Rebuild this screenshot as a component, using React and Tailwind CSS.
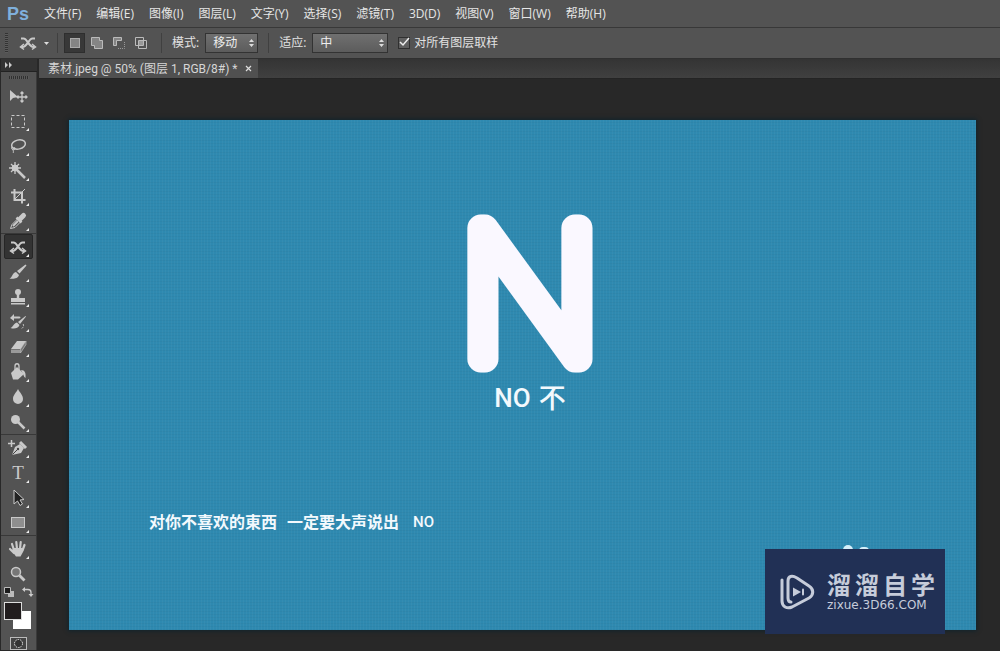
import { useState } from 'react';

const menus = [
  '文件(F)', '编辑(E)', '图像(I)', '图层(L)', '文字(Y)', '选择(S)',
  '滤镜(T)', '3D(D)', '视图(V)', '窗口(W)', '帮助(H)',
];

const ShufflePaths = () => (
  <g fill="none" stroke="currentColor" strokeWidth="2">
    <path d="M5 7.500h2.500c4 0 5 8.500 10 8.500h1" />
    <path d="M19 7.500h-2.500c-4 0-5 8.500-10 8.500h-1" />
    <path d="M8 13l-3.500 3 3.500 2.500M16 13l3.500 3-3.500 2.500" strokeWidth="1.500" />
  </g>
);

// every icon sits on a 24x24 grid, the flyout mark is added by ToolButton
const icons = {
  move: (
    <>
      <path d="M4 6v11l3-3 5-1z" fill="currentColor" />
      <path d="M16 8v10M11 13h10M14.500 9.500L16 8l1.500 1.500M14.500 16.500L16 18l1.500-1.500M12.500 11.500L11 13l1.500 1.500M19.500 11.500L21 13l-1.500 1.500" fill="none" stroke="currentColor" strokeWidth="1.300" />
    </>
  ),
  marquee: <rect x="5.500" y="6.500" width="13" height="12" fill="none" stroke="currentColor" strokeDasharray="3 2" />,
  lasso: (
    <g fill="none" stroke="currentColor" strokeWidth="1.500">
      <ellipse cx="12.500" cy="10.500" rx="7" ry="4.500" transform="rotate(-14 12.500 10.500)" />
      <path d="M6 13c-2 2 2 4 3 2s-2-2-2 0 1 3 0 4" strokeWidth="1" />
    </g>
  ),
  wand: (
    <g stroke="currentColor" fill="none">
      <circle cx="9" cy="9" r="3" fill="currentColor" />
      <path d="M9 3v12M3 9h12M5 5l8 8M13 5l-8 8" strokeWidth="1.300" />
      <path d="M11 11l8 8" strokeWidth="2.500" />
    </g>
  ),
  crop: (
    <g fill="none" stroke="currentColor">
      <path d="M8.500 5v11h11M5 8.500h11v11" strokeWidth="2" />
      <path d="M9 15L19 5" />
    </g>
  ),
  eyedropper: (
    <g stroke="currentColor" fill="none">
      <path d="M4.500 19.500l1.500-4 6-6 3 3-6 6z" />
      <path d="M7 17l5-5" strokeWidth="2" />
      <path d="M10.500 8.500l5 5" strokeWidth="2.500" />
      <path d="M14 10l3.500-3.500" strokeWidth="5" strokeLinecap="round" />
    </g>
  ),
  contentMove: <ShufflePaths />,
  brush: (
    <g fill="currentColor">
      <path d="M19.500 4.500L11 11l2.500 2.500 7-8z" />
      <path d="M10 12l3 3c-1 4-6 4-9.500 3.500 3-1 2.500-5.500 6.500-6.500z" />
    </g>
  ),
  stamp: (
    <g fill="currentColor">
      <circle cx="12" cy="7" r="3" />
      <path d="M10.800 8h2.400v5h-2.400zM5 13h14v4H5zM5 18h14v1.500H5z" />
    </g>
  ),
  historyBrush: (
    <g fill="currentColor">
      <path d="M19.500 6L12 12l2 2 6-7.500z" />
      <path d="M11 12.500l2.500 2.500c-1.500 4-6 4-9 3 3-1 2.500-4.500 6.500-5.500z" />
      <path d="M4 8l4-4v2.500h5c2 0 2 2 0 2H8V11z" />
      <path d="M17 14c1.500 1.500 0 4-2 5" fill="none" stroke="currentColor" strokeDasharray="2 1" />
    </g>
  ),
  eraser: (
    <>
      <path d="M11 6h9l-5 8H5z" fill="currentColor" />
      <path d="M5 14.500h9V18H5z" fill="#999" />
      <path d="M20 6v3.500L14.500 18v-4z" fill="#777" stroke="currentColor" strokeWidth=".6" />
    </>
  ),
  bucket: (
    <>
      <path d="M11 7l7 7-6 5.500H7L5 13z" fill="currentColor" />
      <path d="M9 13V6c0-3 4-3 4 0v5" fill="none" stroke="currentColor" strokeWidth="1.300" />
      <path d="M15 10c4 0 5 3 4.500 8-2-1-2-4-3-5z" fill="currentColor" />
    </>
  ),
  blur: <path d="M12 4c2 4 5 6 5 10a5 5 0 01-10 0c0-4 3-6 5-10z" fill="currentColor" />,
  dodge: (
    <>
      <circle cx="9.500" cy="9.500" r="4.500" fill="currentColor" />
      <path d="M12 12l6.500 6.500" stroke="currentColor" strokeWidth="2.500" />
    </>
  ),
  pen: (
    <>
      <path d="M5.500 4v7M2 7.500h7" stroke="currentColor" strokeWidth="1.500" />
      <path d="M6 19l3-8 5-3 4 4-3 5z" fill="currentColor" />
      <path d="M14 6l6 6" stroke="currentColor" strokeWidth="3" />
      <path d="M6.500 18.500L12 13" stroke="#444" />
      <circle cx="12" cy="13" r="1.200" fill="#444" />
    </>
  ),
  select: <path d="M8 4v14l3.500-3 2.500 4.500 2.500-1.500-2.500-4 4-.5z" fill="#222" stroke="currentColor" />,
  shape: <rect x="5.500" y="6.500" width="13" height="10" fill="#8e8e8e" stroke="currentColor" />,
  hand: (
    <>
      <path d="M8 13L6 7M11 12l-.7-7M14 12l.7-7M16.500 13.500L18.500 8M8 16l-4-4" stroke="currentColor" strokeWidth="2.200" strokeLinecap="round" />
      <path d="M7 11h10.500l-.5 4-2.500 4.500H10L6 14z" fill="currentColor" />
    </>
  ),
  zoom: (
    <>
      <circle cx="10" cy="10" r="4.500" fill="#777" stroke="currentColor" strokeWidth="1.500" />
      <path d="M13.500 13.500l5 5" stroke="currentColor" strokeWidth="2.800" />
    </>
  ),
};

const toolGroups = [
  [['move', '移动工具'], ['marquee', '矩形选框工具'], ['lasso', '套索工具'], ['wand', '魔棒工具'], ['crop', '裁剪工具'], ['eyedropper', '吸管工具']],
  [['contentMove', '内容感知移动工具'], ['brush', '画笔工具'], ['stamp', '仿制图章工具'], ['historyBrush', '历史记录画笔工具'], ['eraser', '橡皮擦工具'], ['bucket', '油漆桶工具'], ['blur', '模糊工具'], ['dodge', '减淡工具']],
  [['pen', '添加锚点工具'], ['type', '横排文字工具'], ['select', '直接选择工具'], ['shape', '矩形工具']],
  [['hand', '抓手工具'], ['zoom', '缩放工具']],
];

function ToolButton({ id, label, active, onClick }) {
  return (
    <button
      type="button"
      aria-label={label}
      onClick={onClick}
      className={`w-[29px] h-[25px] pr-0.5 flex items-center justify-center rounded-xs border ${
        active ? 'bg-[#333] border-[#262626]' : 'border-transparent'
      }`}
    >
      <svg width="24" height="24" viewBox="0 0 24 24" className="shrink-0">
        {id === 'type' ? (
          <text x="12" y="18" textAnchor="middle" fill="currentColor" fontSize="19" fontFamily="Liberation Serif, serif">T</text>
        ) : (
          icons[id]
        )}
        {id !== 'move' && id !== 'zoom' && <path d="M23 19v3h-3z" fill="#eee" />}
      </svg>
    </button>
  );
}

function Toolbar() {
  const [tool, setTool] = useState('contentMove');

  return (
    <aside className="w-[39px] shrink-0 bg-[#282828] pl-px pr-0.5">
      <div className="h-[13px] bg-[#333] border-b border-[#222] pl-1 flex items-center">
        <svg width="8" height="6" viewBox="0 0 8 6" fill="#ccc">
          <path d="M0 0l3 3-3 3zM4 0l3 3-3 3z" />
        </svg>
      </div>
      <div className="bg-[#535353] flex flex-col items-center border-r border-[#3a3a3a] text-[#c9c9c9]">
        <div className="w-5 h-[3px] mt-1 mb-1 bg-[repeating-linear-gradient(90deg,#303030_0_1px,#5a5a5a_1px_2px)]" />
        {toolGroups.map((group, i) => (
          <div key={i} className={i === 0 ? 'w-full flex flex-col items-center' : 'w-full flex flex-col items-center border-t border-[#383838]'}>
            {group.map(([id, label]) => (
              <ToolButton key={id} id={id} label={label} active={tool === id} onClick={() => setTool(id)} />
            ))}
          </div>
        ))}
        <div className="w-full h-3 px-0.5 flex justify-between">
          <button type="button" aria-label="默认前景色和背景色">
            <svg width="12" height="12" viewBox="0 0 12 12">
              <path d="M5 5h6v6H5z" fill="#bbb" />
              <path d="M1.500 1.500h6v6h-6z" fill="#1c1c1c" stroke="#bbb" />
            </svg>
          </button>
          <button type="button" aria-label="切换前景色和背景色">
            <svg width="12" height="12" viewBox="0 0 12 12">
              <path d="M2 3.500h4c2 0 3 1 3 3V9" fill="none" stroke="#ccc" strokeWidth="1.300" />
              <path d="M0 3.500L3 1v5zM6.500 8h5L9 11z" fill="#ccc" />
            </svg>
          </button>
        </div>
        <div className="w-full px-[3px] pt-1 grid grid-cols-[9px_9px_9px] grid-rows-[9px_9px_9px]">
          <button type="button" aria-label="背景色" className="col-start-2 col-end-4 row-start-2 row-end-4 bg-white" />
          <button type="button" aria-label="前景色" className="col-start-1 col-end-3 row-start-1 row-end-3 bg-[#211d1e] border border-[#ddd]" />
        </div>
        <button type="button" aria-label="快速蒙版" className="mt-2">
          <svg width="17" height="13" viewBox="0 0 17 13">
            <rect x=".5" y=".5" width="16" height="12" fill="#444" stroke="#bbb" />
            <circle cx="8.500" cy="6.500" r="4" fill="#333" stroke="#eee" strokeDasharray="1.500 1" />
          </svg>
        </button>
      </div>
    </aside>
  );
}

function BarSelect({ id, label, value, options, className }) {
  return (
    <div className="flex items-center gap-1.5">
      <label htmlFor={id}>{label}</label>
      <div className={`relative ${className}`}>
        <select
          id={id}
          defaultValue={value}
          className="appearance-none block w-full h-5 pl-[7px] text-[12px] leading-4 text-[#eee] bg-linear-to-b from-[#707070] to-[#5c5c5c] border border-[#333]"
        >
          {options.map(o => (
            <option key={o}>{o}</option>
          ))}
        </select>
        <svg width="5" height="8" viewBox="0 0 5 8" fill="#ddd" className="absolute right-1 top-1.5 pointer-events-none">
          <path d="M0 3l2.500-3L5 3zM0 5h5L2.500 8z" />
        </svg>
      </div>
    </div>
  );
}

const selectionModes = [
  ['新选区', <rect x="1.500" y="1.500" width="9" height="9" fill="#858585" stroke="#aaa" />],
  ['添加到选区', <path d="M.5.5h8v3h3v8h-8v-3h-3z" fill="#858585" stroke="#bbb" />],
  ['从选区减去', <><path d="M.5.5h8v3h-5v5h-3z" fill="#858585" stroke="#bbb" /><path d="M5 11.500h6.500V5" fill="none" stroke="#999" strokeDasharray="1 1" /></>],
  ['与选区交叉', <><path d="M.5.5h8v8h-8zM3.500 3.500h8v8h-8z" fill="none" stroke="#bbb" /><path d="M4 4h4v4H4z" fill="#999" /></>],
];

function OptionsBar() {
  const [mode, setMode] = useState(0);

  return (
    <div className="h-8 bg-[#535353] border-t border-[#383838] border-b border-b-[#303030] flex items-center text-[12px] text-[#e2e2e2]">
      <div className="ml-[5px] w-[3px] h-5 bg-[repeating-linear-gradient(180deg,#333_0_1px,#5c5c5c_1px_2px)]" />
      <button type="button" aria-label="当前工具" className="ml-2 mr-0.5 flex items-center gap-1 text-[#c9c9c9]">
        <svg width="24" height="24" viewBox="0 0 24 24"><ShufflePaths /></svg>
        <svg width="5" height="3" viewBox="0 0 5 3" fill="#ddd"><path d="M0 0h5L2.500 3z" /></svg>
      </button>
      <div className="ml-1.5 w-px h-5 bg-[#404040]" />
      <div className="ml-1.5 flex items-center gap-px">
        {selectionModes.map(([label, art], i) => (
          <button
            key={label}
            type="button"
            aria-label={label}
            onClick={() => setMode(i)}
            className={`w-[21px] h-5 flex items-center justify-center border ${
              i === mode ? 'bg-[#383838] border-[#2e2e2e]' : 'border-transparent'
            }`}
          >
            <svg width="12" height="12" viewBox="0 0 12 12">{art}</svg>
          </button>
        ))}
      </div>
      <div className="mx-2.5 w-px h-5 bg-[#404040]" />
      <BarSelect id="mode" label="模式:" value="移动" options={['移动', '扩展']} className="w-[53px]" />
      <div className="mx-2.5 w-px h-5 bg-[#404040]" />
      <BarSelect id="adapt" label="适应:" value="中" options={['非常严格', '严格', '中', '松散', '非常松散']} className="w-[76px]" />
      <label className="ml-2.5 flex items-center gap-1">
        <span className="relative w-3 h-3">
          <input type="checkbox" defaultChecked className="peer appearance-none block w-3 h-3 bg-[#606060] border border-[#303030]" />
          <svg width="12" height="12" viewBox="0 0 12 12" className="absolute left-0 top-0 hidden peer-checked:block pointer-events-none">
            <path d="M2 5l3 3 6-7" fill="none" stroke="#eee" strokeWidth="1.500" />
          </svg>
        </span>
        对所有图层取样
      </label>
    </div>
  );
}

function Watermark() {
  return (
    <div className="absolute right-[31px] -bottom-1 w-[180px] h-[85px] bg-[#213055] text-[#c6ccda] flex items-center gap-3 pl-[15px]">
      <svg width="35" height="36" viewBox="0 0 35 36" fill="none" stroke="currentColor" strokeWidth="3" strokeLinecap="round" strokeLinejoin="round">
        <path d="M2 6v21c0 6 5 8 10 6l17-9c5-3 5-9 0-12L17 4C12 1 8 2 8 7v17c0 3 1 4 3 4" />
        <path d="M13 13.500l8 4.500-8 4.500z" fill="currentColor" stroke="none" />
        <path d="M23 15.500v5" strokeWidth="2" />
      </svg>
      <div>
        <p className="flex gap-1 text-[24px] leading-[26px] font-bold">
          <span>溜</span>
          <span>溜</span>
          <span>自</span>
          <span>学</span>
        </p>
        <p className="font-['DejaVu_Sans',sans-serif] text-[12px] leading-[14px]">zixue.3D66.COM</p>
      </div>
    </div>
  );
}

function Artboard() {
  return (
    <div className="relative flex-1 flex flex-col bg-[#2e89b0] shadow-[0_0_4px_1px_#10242d] text-[#f3f9fd]">
      <div className="flex-1 flex flex-col bg-[repeating-linear-gradient(90deg,#ffffff08_0_1px,transparent_1px_3px),repeating-linear-gradient(0deg,#00000008_0_1px,transparent_1px_3px)]">
        <div className="pt-[92px] pl-[14px] flex flex-col items-center">
          <svg width="130" height="162" viewBox="0 0 130 162" className="overflow-visible">
            <text
              x="65"
              y="147"
              textAnchor="middle"
              fontFamily="Inter, sans-serif"
              fontWeight="100"
              fontSize="180"
              fill="#faf8ff"
              stroke="#faf8ff"
              strokeWidth="27"
              strokeLinejoin="round"
            >
              N
            </text>
          </svg>
          <p className="mt-1 pl-px flex items-center gap-2 text-[27px] leading-10 font-medium">
            <span className="font-['Roboto',sans-serif] text-[26px]">NO</span>
            <span>不</span>
          </p>
        </div>
        <p className="mt-[92px] pl-20 flex items-center text-[16px] leading-6 font-bold">
          <span>对你不喜欢的東西</span>
          <span className="ml-2.5">一定要大声说出</span>
          <span className="ml-3.5 font-['Roboto',sans-serif] font-medium text-[15px]">NO</span>
        </p>
      </div>
      <div className="absolute right-[107px] bottom-[75px] flex items-end gap-1.5">
        <span className="w-2.5 h-2.5 rounded-full bg-[#d5effa]" />
        <span className="w-2.5 h-2 rounded-full bg-[#d5effa]" />
      </div>
      <Watermark />
    </div>
  );
}

export default function App() {
  return (
    <div className="min-h-screen flex flex-col bg-[#282828] font-['Open_Sans','Noto_Sans_CJK_SC',sans-serif]">
      <header>
        <nav className="h-[27px] bg-[#535353] flex items-center text-[12px] text-[#e6e6e6]">
          <span className="w-[37px] pl-[7px] font-['Liberation_Sans'] font-bold text-[18px] leading-5 text-[#7fb0dc]">Ps</span>
          <ul className="pl-[7px] flex gap-[15px]">
            {menus.map(m => (
              <li key={m}>
                <button type="button" className="whitespace-nowrap">{m}</button>
              </li>
            ))}
          </ul>
        </nav>
        <OptionsBar />
      </header>
      <div className="flex-1 flex">
        <Toolbar />
        <main className="flex-1 flex flex-col">
          <div className="h-5 bg-linear-to-b from-[#343434] to-[#404040] border-b border-[#242424] flex">
            <div className="h-[19px] pl-[9px] pr-1.5 bg-[#505050] flex items-center gap-2 text-[12px] text-[#d6d6d6]">
              <span className="font-['Roboto','Noto_Sans_CJK_SC',sans-serif]">素材.jpeg @ 50% (图层 1, RGB/8#) *</span>
              <button type="button" aria-label="关闭">
                <svg width="7" height="7" viewBox="0 0 7 7" stroke="#ddd" strokeWidth="1.200"><path d="M1 1l5 5M6 1L1 6" /></svg>
              </button>
            </div>
          </div>
          <div className="flex-1 flex flex-col pt-[41px] pl-[30px] pr-6 pb-[21px]">
            <Artboard />
          </div>
        </main>
      </div>
    </div>
  );
}
